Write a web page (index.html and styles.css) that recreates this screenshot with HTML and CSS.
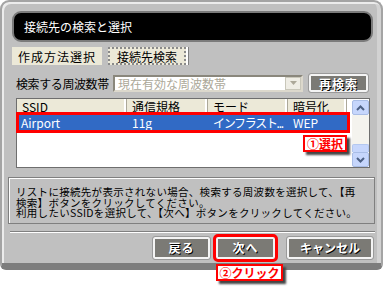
FILE: index.html
```html
<!DOCTYPE html>
<html lang="ja">
<head>
    <meta charset="UTF-8">
    <meta name="viewport" content="width=device-width, initial-scale=1.0">
    <title>接続先の検索と選択</title>
    <link rel="stylesheet" href="styles.css">
</head>
<body>

<div class="window">
    <div class="titlebar">接続先の検索と選択</div>

    <div class="tabs">
        <div class="tab">作成方法選択</div>
        <div class="tab tab-active">接続先検索</div>
    </div>

    <div class="search-row">
        <span class="search-label">検索する周波数帯</span>
        <div class="combo">
            <span class="combo-text">現在有効な周波数帯</span>
            <span class="combo-btn"><svg width="7" height="4" viewBox="0 0 7 4"><path d="M0 0h7L3.5 4z" fill="#aca899"/></svg></span>
        </div>
        <button class="btn btn-search">再検索</button>
    </div>

    <div class="list">
        <div class="list-main">
            <div class="list-head">
                <span>SSID</span>
                <span>通信規格</span>
                <span>モード</span>
                <span>暗号化</span>
            </div>
            <div class="list-row selected">
                <span>Airport</span>
                <span>11g</span>
                <span class="mode">インフラスト...</span>
                <span>WEP</span>
            </div>
        </div>
        <div class="scrollbar">
            <div class="scroll-btn">
                <svg width="9" height="6" viewBox="0 0 9 6"><path d="M1 5L4.5 1.5L8 5" fill="none" stroke="#4d6185" stroke-width="2"/></svg>
            </div>
            <div class="scroll-track"><div class="scroll-thumb"></div></div>
            <div class="scroll-btn">
                <svg width="9" height="6" viewBox="0 0 9 6"><path d="M1 1L4.5 4.5L8 1" fill="none" stroke="#4d6185" stroke-width="2"/></svg>
            </div>
        </div>
    </div>

    <div class="info">
        リストに接続先が表示されない場合、検索する周波数を選択して、【再<br>
        検索】ボタンをクリックしてください。<br>
        利用したいSSIDを選択して、【次へ】ボタンをクリックしてください。
    </div>

    <div class="separator"></div>

    <div class="actions">
        <button class="btn btn-back">戻る</button>
        <button class="btn btn-next">次へ</button>
        <button class="btn btn-cancel">キャンセル</button>
    </div>

    <!-- callouts -->
    <div class="callout callout-select">①選択</div>
    <div class="callout callout-click">②クリック</div>
</div>

</body>
</html>
```

FILE: styles.css
```css
* {
    box-sizing: border-box;
}
html, body {
    min-height: 291px;
}
body {
    margin: 0;
    background: #fff;
    font-family: "Noto Sans CJK JP", "Noto Sans", sans-serif;
    font-size: 12px;
    color: #000;
}
.window {
    position: relative;
    width: 383px;
    height: 270px;
    background: #c0c0c0;
    border: 2px solid #a4a4a4;
    border-bottom: 7px solid #7d7d7d;
    border-radius: 9px 9px 6px 6px;
    padding: 9px 8px 0 10px;
    box-shadow: inset 2px 2px 0 #ececec, inset -4px 0 0 #d2d2d2;
}
.titlebar {
    height: 31px;
    background: #000;
    border: 2px solid #7b7b7b;
    border-radius: 9px;
    color: #fff;
    padding-left: 10px;
    display: flex;
    align-items: center;
    font-size: 12px;
}
.tabs {
    display: flex;
    gap: 6px;
    margin-top: 5px;
}
.tab {
    height: 18px;
    width: 90px;
    background: #ece9d8;
    display: flex;
    align-items: center;
    justify-content: center;
    font-size: 12px;
    letter-spacing: 1px;
}
.tab-active {
    width: 78px;
    letter-spacing: 0;
    border: 2px dotted #8a8a8a;
    box-shadow: 2px 0 0 #fff, 3px 0 0 #808080;
}
.search-row {
    display: flex;
    align-items: center;
    height: 18px;
    margin-top: 9px;
}
.search-label {
    width: 97px;
    margin-left: 4px;
    white-space: nowrap;
    letter-spacing: -0.4px;
}
.combo {
    width: 190px;
    height: 17px;
    background: #fff;
    border: 2px solid;
    border-color: #8a877c #dcd8cc #dcd8cc #8a877c;
    display: flex;
    align-items: center;
    justify-content: space-between;
}
.combo-text {
    color: #aca899;
    padding-left: 3px;
    line-height: 13px;
}
.combo-btn {
    width: 16px;
    height: 13px;
    background: #efede5;
    border: 1px solid #c9c7ba;
    display: flex;
    align-items: center;
    justify-content: center;
}
.btn {
    font-family: inherit;
    font-size: 12px;
    font-weight: bold;
    color: #fff;
    text-shadow: 1px 1px 0 #000;
    background: #7b7a75;
    border: 2px solid #f4f4f4;
    border-radius: 2px;
    padding: 0;
    height: 22px;
    line-height: 16px;
    outline: 1px solid #9a9a9a;
}
.btn-search {
    width: 59px;
    height: 18px;
    margin-left: 6px;
    letter-spacing: 1px;
}
.list {
    display: flex;
    width: 354px;
    height: 70px;
    margin: 6px 0 0 4px;
    background: #fff;
    border: 1px solid #6e6e6e;
}
.list-main {
    width: 333px;
}
.list-head, .list-row {
    display: grid;
    grid-template-columns: 110px 81px 80px 59px;
    height: 15px;
    line-height: 15px;
}
.list-head {
    height: 14px;
}
.list-head span {
    background: #ece9d8;
    border-right: 1px solid #aca899;
    box-shadow: inset -2px 0 0 #fff;
    padding-left: 5px;
    white-space: nowrap;
}
.list-row {
    margin: 2px 0 0 2px;
    width: 328px;
    grid-template-columns: 108px 81px 80px 59px;
}
.list-row span {
    padding-left: 5px;
    white-space: nowrap;
}
.list-row span:first-child {
    padding-left: 2px;
}
.list-row .mode {
    letter-spacing: -1.3px;
}
.selected {
    background: #316ac5;
    color: #fff;
    outline: 3px solid #f00;
}
.scrollbar {
    width: 17px;
    margin-left: 3px;
    padding-top: 1px;
    display: flex;
    flex-direction: column;
}
.scroll-btn {
    height: 15px;
    background: #c6d6fc;
    border: 1px solid #a9bde6;
    border-radius: 2px;
    display: flex;
    align-items: center;
    justify-content: center;
}
.scroll-track {
    flex: 1;
    background: #f4f3ee;
    display: flex;
    flex-direction: column;
    justify-content: flex-end;
}
.scroll-thumb {
    height: 8px;
    background: #c6d6fc;
    border: 1px solid #b4c8f0;
    border-bottom: none;
    border-radius: 2px 2px 0 0;
}
.info {
    width: 367px;
    height: 47px;
    margin: 9px 0 0 -4px;
    border: 1px solid #7f7f7f;
    box-shadow: inset 1px 1px 0 #fff;
    padding: 9px 0 0 7px;
    font-size: 10.5px;
    letter-spacing: 0.3px;
    line-height: 10.5px;
    white-space: nowrap;
}
.separator {
    width: 365px;
    margin: 7px 0 0 -2px;
    border-top: 1px solid #808080;
    border-bottom: 1px solid #fff;
}
.actions {
    display: flex;
    justify-content: flex-end;
    margin-top: 4px;
}
.btn-back {
    width: 57px;
    letter-spacing: 1px;
}
.btn-next {
    width: 59px;
    margin-left: 6px;
    letter-spacing: 1px;
    outline: 3px solid #f00;
}
.btn-cancel {
    width: 86px;
    margin-left: 12px;
}
.callout {
    position: absolute;
    background: #fff;
    border: 2px solid #f00;
    color: #f00;
    font-weight: bold;
    font-size: 12px;
    line-height: 13px;
    text-align: center;
    box-shadow: 3px 3px 2px #444;
}
.callout-select {
    left: 301px;
    top: 133px;
    width: 44px;
    height: 17px;
}
.callout-click {
    left: 214px;
    top: 262px;
    width: 67px;
    height: 17px;
}
```
